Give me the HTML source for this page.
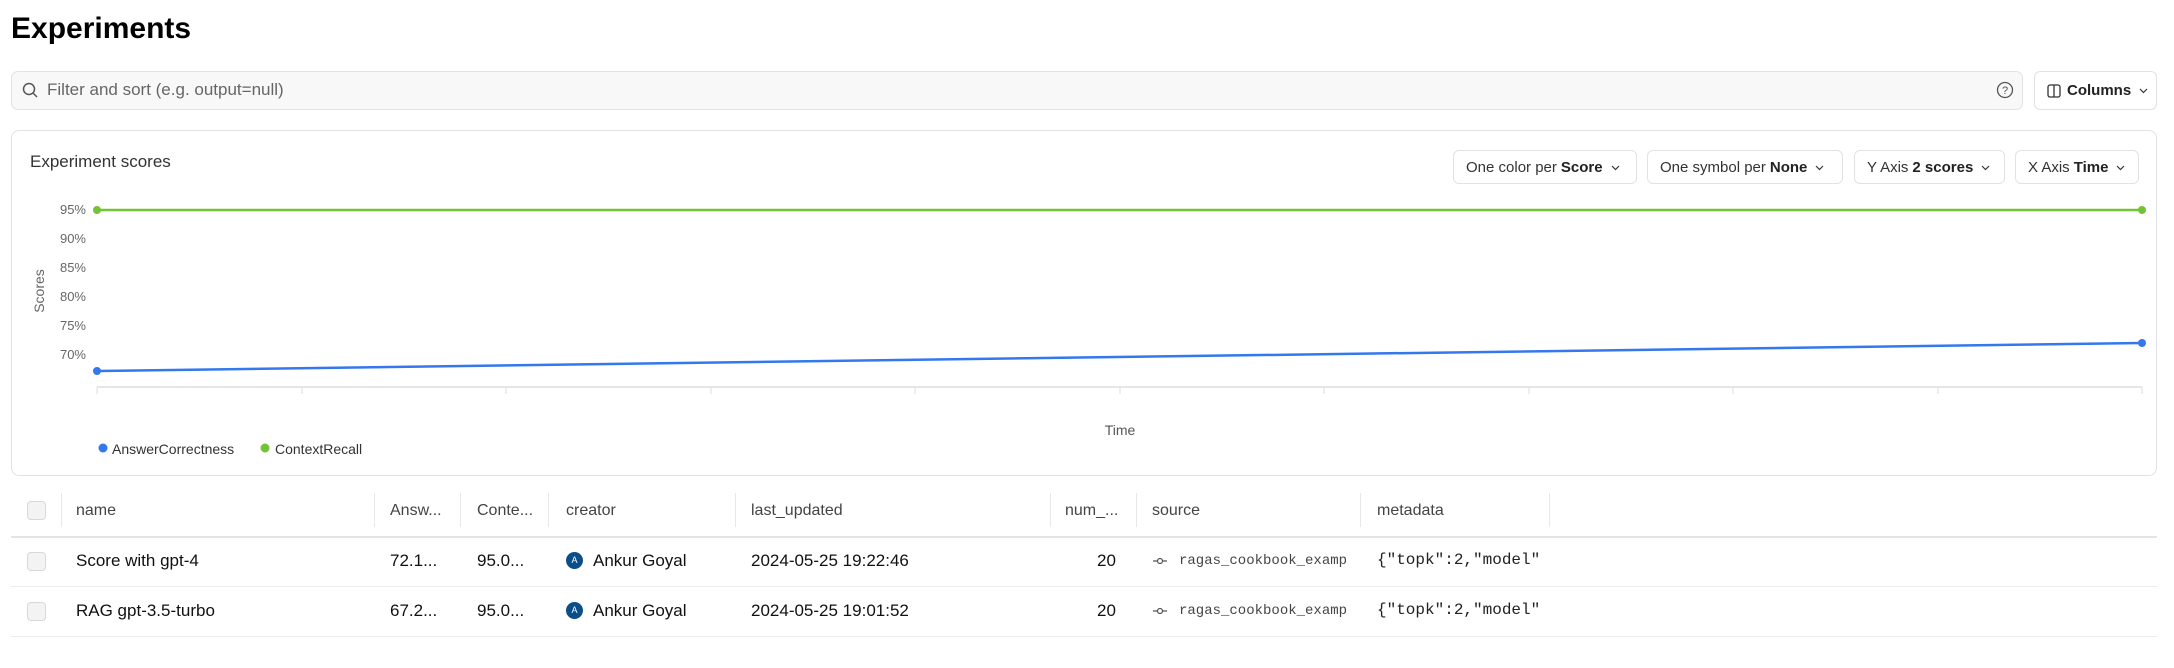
<!DOCTYPE html>
<html><head><meta charset="utf-8"><style>
*{box-sizing:border-box;margin:0;padding:0}
body{width:2174px;height:668px;background:#fff;font-family:"Liberation Sans",sans-serif;color:#111;position:relative;overflow:hidden}
.a{position:absolute;white-space:nowrap}
.btn{position:absolute;border:1px solid #e2e2e2;border-radius:6px;background:#fff;font-size:15px;color:#333;display:flex;align-items:center;padding-left:12px}
.btn b{font-weight:bold;color:#222;margin-left:4px}
.chev{margin-left:8px;width:9px;height:9px}
.hd{position:absolute;top:502px;font-size:16px;color:#444}
.sep{position:absolute;top:493px;width:1px;height:34px;background:#e8e8e8}
.cb{position:absolute;left:27px;width:19px;height:19px;border:1px solid #d8d8d8;border-radius:4px;background:#f3f3f3}
.row{position:absolute;font-size:17px;color:#111}
.mono{font-family:"Liberation Mono",monospace}
</style></head><body>
<div class="a" style="left:11px;top:12px;font-size:30px;font-weight:bold;color:#000">Experiments</div>

<div class="a" style="left:11px;top:71px;width:2012px;height:39px;border:1px solid #e2e2e2;border-radius:7px;background:#f8f8f8"></div>
<svg class="a" style="left:22px;top:82px" width="17" height="17" viewBox="0 0 17 17"><circle cx="7" cy="7" r="5.5" fill="none" stroke="#555" stroke-width="1.5"/><path d="M11 11l4 4" stroke="#555" stroke-width="1.5"/></svg>
<div class="a" style="left:47px;top:80px;font-size:17px;color:#666">Filter and sort (e.g. output=null)</div>
<svg class="a" style="left:1996px;top:81px" width="18" height="18" viewBox="0 0 18 18"><circle cx="9" cy="9" r="7.5" fill="none" stroke="#555" stroke-width="1.3"/><text x="9" y="13" font-size="11" text-anchor="middle" fill="#555" font-family="Liberation Sans">?</text></svg>
<div class="btn" style="left:2034px;top:71px;width:123px;height:39px;font-weight:bold;color:#222;font-size:15px">
<svg width="14" height="14" viewBox="0 0 14 14" style="margin-right:6px"><rect x="1" y="1" width="12" height="12" rx="2" fill="none" stroke="#333" stroke-width="1.3"/><path d="M7 1v12" stroke="#333" stroke-width="1.3"/></svg>Columns<svg class="chev" viewBox="0 0 9 9"><path d="M1 3l3.5 3.5L8 3" fill="none" stroke="#333" stroke-width="1.2"/></svg></div>

<div class="a" style="left:11px;top:130px;width:2146px;height:346px;border:1px solid #e2e2e2;border-radius:8px"></div>
<div class="a" style="left:30px;top:152px;font-size:17px;color:#333">Experiment scores</div>
<div class="btn" style="left:1453px;top:150px;width:184px;height:34px">One color per<b>Score</b><svg class="chev" viewBox="0 0 9 9"><path d="M1 3l3.5 3.5L8 3" fill="none" stroke="#333" stroke-width="1.2"/></svg></div>
<div class="btn" style="left:1647px;top:150px;width:196px;height:34px">One symbol per<b>None</b><svg class="chev" viewBox="0 0 9 9"><path d="M1 3l3.5 3.5L8 3" fill="none" stroke="#333" stroke-width="1.2"/></svg></div>
<div class="btn" style="left:1854px;top:150px;width:151px;height:34px">Y Axis<b>2 scores</b><svg class="chev" viewBox="0 0 9 9"><path d="M1 3l3.5 3.5L8 3" fill="none" stroke="#333" stroke-width="1.2"/></svg></div>
<div class="btn" style="left:2015px;top:150px;width:124px;height:34px">X Axis<b>Time</b><svg class="chev" viewBox="0 0 9 9"><path d="M1 3l3.5 3.5L8 3" fill="none" stroke="#333" stroke-width="1.2"/></svg></div>

<svg class="a" style="left:0;top:0" width="2174" height="480" font-family="Liberation Sans">
<g font-size="13" fill="#666" text-anchor="end">
<text x="86" y="214">95%</text><text x="86" y="243">90%</text><text x="86" y="272">85%</text><text x="86" y="301">80%</text><text x="86" y="330">75%</text><text x="86" y="359">70%</text>
</g>
<text transform="translate(44,291) rotate(-90)" font-size="14" fill="#666" text-anchor="middle">Scores</text>
<path d="M97 387H2142" stroke="#ddd" stroke-width="1.5"/>
<g stroke="#ddd" stroke-width="1">
<path d="M97 387v7M302 387v7M506 387v7M711 387v7M915 387v7M1120 387v7M1324 387v7M1529 387v7M1733 387v7M1938 387v7M2142 387v7"/>
</g>
<path d="M97 210H2142" stroke="#72c436" stroke-width="2.5"/>
<circle cx="97" cy="210" r="4" fill="#72c436"/><circle cx="2142" cy="210" r="4" fill="#72c436"/>
<path d="M97 371L2142 343" stroke="#3478ef" stroke-width="2.5"/>
<circle cx="97" cy="371" r="4" fill="#3478ef"/><circle cx="2142" cy="343" r="4" fill="#3478ef"/>
<text x="1120" y="435" font-size="14" fill="#555" text-anchor="middle">Time</text>
<circle cx="103" cy="448" r="4.5" fill="#3478ef"/>
<text x="112" y="454" font-size="14" fill="#333">AnswerCorrectness</text>
<circle cx="265" cy="448" r="4.5" fill="#72c436"/>
<text x="275" y="454" font-size="14" fill="#333">ContextRecall</text>
</svg>

<div class="cb" style="top:501px"></div>
<div class="sep" style="left:61px"></div><div class="sep" style="left:374px"></div><div class="sep" style="left:460px"></div><div class="sep" style="left:548px"></div><div class="sep" style="left:735px"></div><div class="sep" style="left:1050px"></div><div class="sep" style="left:1136px"></div><div class="sep" style="left:1360px"></div><div class="sep" style="left:1549px"></div>
<div class="hd" style="left:76px">name</div><div class="hd" style="left:390px">Answ...</div><div class="hd" style="left:477px">Conte...</div><div class="hd" style="left:566px">creator</div><div class="hd" style="left:751px">last_updated</div><div class="hd" style="left:1065px">num_...</div><div class="hd" style="left:1152px">source</div><div class="hd" style="left:1377px">metadata</div>
<div class="a" style="left:11px;top:536px;width:2146px;height:2px;background:#e4e4e4"></div>
<div class="a" style="left:11px;top:586px;width:2146px;height:1px;background:#ececec"></div>
<div class="a" style="left:11px;top:636px;width:2146px;height:1px;background:#ececec"></div>

<div class="cb" style="top:552px"></div>
<div class="row" style="left:76px;top:551px">Score with gpt-4</div>
<div class="row" style="left:390px;top:551px">72.1...</div>
<div class="row" style="left:477px;top:551px">95.0...</div>
<div class="a" style="left:566px;top:552px;width:17px;height:17px;border-radius:50%;background:#0b4f8a;color:#fff;font-size:9px;text-align:center;line-height:17px">A</div>
<div class="row" style="left:593px;top:551px">Ankur Goyal</div>
<div class="row" style="left:751px;top:551px">2024-05-25 19:22:46</div>
<div class="row" style="left:1097px;top:551px">20</div>
<svg class="a" style="left:1153px;top:556px" width="14" height="10" viewBox="0 0 14 10"><circle cx="7" cy="5" r="2.5" fill="none" stroke="#555" stroke-width="1.2"/><path d="M0 5h4.5M9.5 5H14" stroke="#555" stroke-width="1.2"/></svg>
<div class="row mono" style="left:1179px;top:553px;font-size:14px;color:#444;width:167px;overflow:hidden">ragas_cookbook_example</div>
<div class="row mono" style="left:1377px;top:551px;font-size:16px;color:#222;width:172px;overflow:hidden">{"topk":2,"model"</div>

<div class="cb" style="top:602px"></div>
<div class="row" style="left:76px;top:601px">RAG gpt-3.5-turbo</div>
<div class="row" style="left:390px;top:601px">67.2...</div>
<div class="row" style="left:477px;top:601px">95.0...</div>
<div class="a" style="left:566px;top:602px;width:17px;height:17px;border-radius:50%;background:#0b4f8a;color:#fff;font-size:9px;text-align:center;line-height:17px">A</div>
<div class="row" style="left:593px;top:601px">Ankur Goyal</div>
<div class="row" style="left:751px;top:601px">2024-05-25 19:01:52</div>
<div class="row" style="left:1097px;top:601px">20</div>
<svg class="a" style="left:1153px;top:606px" width="14" height="10" viewBox="0 0 14 10"><circle cx="7" cy="5" r="2.5" fill="none" stroke="#555" stroke-width="1.2"/><path d="M0 5h4.5M9.5 5H14" stroke="#555" stroke-width="1.2"/></svg>
<div class="row mono" style="left:1179px;top:603px;font-size:14px;color:#444;width:167px;overflow:hidden">ragas_cookbook_example</div>
<div class="row mono" style="left:1377px;top:601px;font-size:16px;color:#222;width:172px;overflow:hidden">{"topk":2,"model"</div>
</body></html>
